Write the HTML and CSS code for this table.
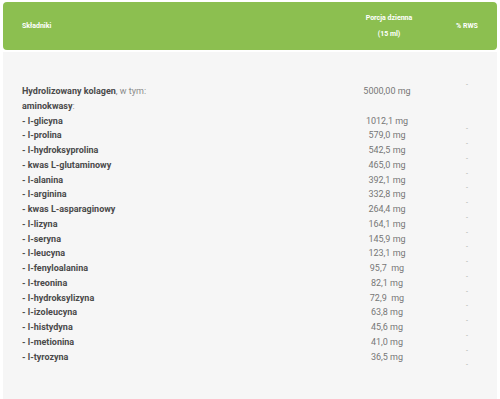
FILE: index.html
```html
<!DOCTYPE html>
<html lang="pl">
<head>
<meta charset="utf-8">
<link rel="stylesheet" href="styles.css">
</head>
<body>
<div class="table">
  <div class="head">
    <div class="hcell hname">Składniki</div>
    <div class="hcell hval">Porcja dzienna<br>(15 ml)</div>
    <div class="hcell hrws">% RWS</div>
  </div>
  <div class="body">
    <div class="col names">
      <div class="line"><b>Hydrolizowany kolagen</b><span class="light">, w tym:</span></div>
      <div class="line"><b>aminokwasy</b><span class="light">:</span></div>
      <div class="line"><b>- l-glicyna</b></div>
      <div class="line"><b>- l-prolina</b></div>
      <div class="line"><b>- l-hydroksyprolina</b></div>
      <div class="line"><b>- kwas L-glutaminowy</b></div>
      <div class="line"><b>- l-alanina</b></div>
      <div class="line"><b>- l-arginina</b></div>
      <div class="line"><b>- kwas L-asparaginowy</b></div>
      <div class="line"><b>- l-lizyna</b></div>
      <div class="line"><b>- l-seryna</b></div>
      <div class="line"><b>- l-leucyna</b></div>
      <div class="line"><b>- l-fenyloalanina</b></div>
      <div class="line"><b>- l-treonina</b></div>
      <div class="line"><b>- l-hydroksylizyna</b></div>
      <div class="line"><b>- l-izoleucyna</b></div>
      <div class="line"><b>- l-histydyna</b></div>
      <div class="line"><b>- l-metionina</b></div>
      <div class="line"><b>- l-tyrozyna</b></div>
    </div>
    <div class="col vals">
      <div class="line">5000,00 mg</div>
      <div class="line">&nbsp;</div>
      <div class="line">1012,1 mg</div>
      <div class="line">579,0 mg</div>
      <div class="line">542,5 mg</div>
      <div class="line">465,0 mg</div>
      <div class="line">392,1 mg</div>
      <div class="line">332,8 mg</div>
      <div class="line">264,4 mg</div>
      <div class="line">164,1 mg</div>
      <div class="line">145,9 mg</div>
      <div class="line">123,1 mg</div>
      <div class="line">95,7&nbsp; mg</div>
      <div class="line">82,1 mg</div>
      <div class="line">72,9&nbsp; mg</div>
      <div class="line">63,8 mg</div>
      <div class="line">45,6 mg</div>
      <div class="line">41,0 mg</div>
      <div class="line">36,5 mg</div>
    </div>
    <div class="col rws">
      <div class="line">-</div>
      <div class="line">&nbsp;</div>
      <div class="line">&nbsp;</div>
      <div class="line">-</div>
      <div class="line">-</div>
      <div class="line">-</div>
      <div class="line">-</div>
      <div class="line">-</div>
      <div class="line">-</div>
      <div class="line">-</div>
      <div class="line">-</div>
      <div class="line">-</div>
      <div class="line">-</div>
      <div class="line">-</div>
      <div class="line">-</div>
      <div class="line">-</div>
      <div class="line">-</div>
      <div class="line">-</div>
      <div class="line">-</div>
      <div class="line">-</div>
    </div>
  </div>
</div>
</body>
</html>
```

FILE: styles.css
```css
html, body {
  margin: 0;
  padding: 0;
  background: #ffffff;
}
body {
  font-family: Roboto, "Liberation Sans", sans-serif;
  padding: 2px 3px 2px 3px;
}
.table {
  width: 494px;
}
.head {
  display: grid;
  grid-template-columns: 334px 100px 60px;
  align-items: center;
  height: 48px;
  background: #8cbf50;
  border-radius: 4px;
  color: #ffffff;
  font-size: 7px;
  font-weight: 700;
}
.hcell {
  line-height: 16px;
}
.hname {
  padding-left: 19px;
}
.hval {
  text-align: center;
  padding-left: 4px;
}
.hrws {
  text-align: center;
}
.body {
  margin-top: 2px;
  background: #f6f6f6;
  display: grid;
  grid-template-columns: 334px 100px 60px;
  align-items: start;
  padding: 26px 0 30px 0;
  font-size: 9px;
}
.line {
  line-height: 14.75px;
  height: 14.75px;
  white-space: nowrap;
}
.names {
  padding-left: 19px;
  padding-top: 6px;
  color: #4a4a4a;
}
.names b {
  font-weight: 700;
}
.light {
  color: #8a8a8a;
  font-weight: 400;
}
.vals {
  padding-top: 6px;
  text-align: center;
  color: #777777;
}
.rws {
  text-align: center;
  color: #aaaaaa;
  font-size: 7px;
}
```
